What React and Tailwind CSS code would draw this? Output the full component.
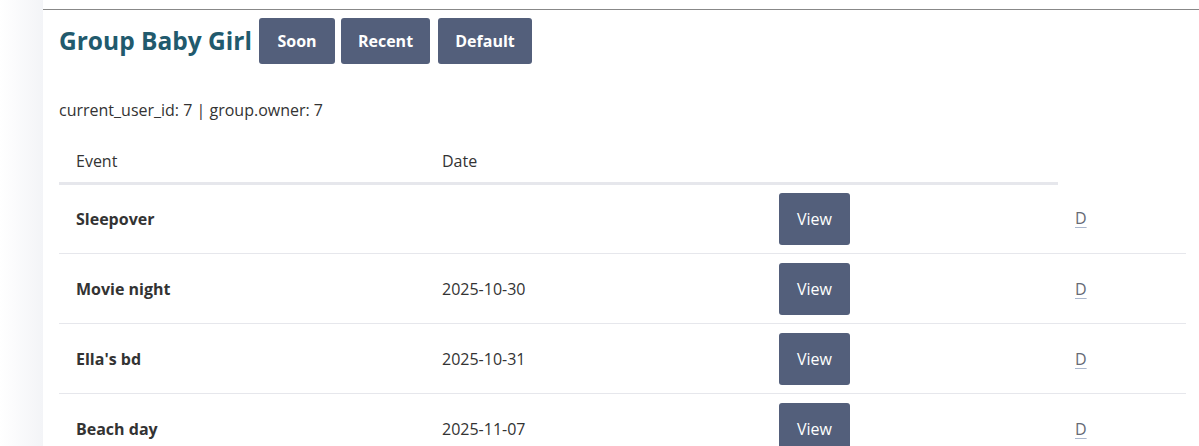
const events = [
  { name: "Sleepover", date: "" },
  { name: "Movie night", date: "2025-10-30" },
  { name: "Ella's bd", date: "2025-10-31" },
  { name: "Beach day", date: "2025-11-07" },
];

export default function App() {
  return (
    <div
      className="flex min-h-[446px] bg-white text-[#333333]"
      style={{ fontFamily: '"Open Sans", "Noto Sans", sans-serif' }}
    >
      <aside className="w-[43px] shrink-0 bg-gradient-to-r from-white to-[#f3f4f7]" />
      <main className="flex-1 mt-[9px] border-t border-[#888888] pl-[16px]">
        <div className="flex items-center pt-[8px]">
          <h1 className="w-[200px] shrink-0 text-[24.5px] font-bold text-[#215a6d] leading-[46px]">
            Group Baby Girl
          </h1>
          <button
            type="button"
            className="w-[76px] h-[46px] rounded-[3px] bg-[#535f7b] text-white font-bold text-[16px]"
          >
            Soon
          </button>
          <button
            type="button"
            className="ml-[6px] w-[89px] h-[46px] rounded-[3px] bg-[#535f7b] text-white font-bold text-[16px]"
          >
            Recent
          </button>
          <button
            type="button"
            className="ml-[8px] w-[94px] h-[46px] rounded-[3px] bg-[#535f7b] text-white font-bold text-[16px]"
          >
            Default
          </button>
        </div>
        <p className="mt-[34px] text-[16px] leading-[24px]">
          current_user_id: 7 | group.owner: 7
        </p>
        <table className="mt-[18px] table-fixed border-collapse w-[1127px] text-[16px]">
          <colgroup>
            <col className="w-[366px]" />
            <col className="w-[337px]" />
            <col className="w-[296px]" />
            <col className="w-[128px]" />
          </colgroup>
          <thead>
            <tr>
              <th className="border-b-[3px] border-[#e6e7ec] text-left font-medium pl-[17px] pt-[9px] pb-[9px] leading-[24px]">
                Event
              </th>
              <th className="border-b-[3px] border-[#e6e7ec] text-left font-medium pl-[17px] leading-[24px]">
                Date
              </th>
              <th className="border-b-[3px] border-[#e6e7ec]" />
              <th />
            </tr>
          </thead>
          <tbody>
            {events.map((ev) => (
              <tr key={ev.name} className="border-b border-[#e6e7ec]">
                <td className="h-[70px] pl-[17px] font-bold align-middle">{ev.name}</td>
                <td className="pl-[17px] align-middle">{ev.date}</td>
                <td className="pl-[17px] align-middle">
                  <button
                    type="button"
                    className="w-[71px] h-[52px] rounded-[3px] bg-[#535f7b] text-white text-[16px]"
                  >
                    View
                  </button>
                </td>
                <td className="pl-[17px] align-middle">
                  <a
                    href="#"
                    className="text-[#666a75] underline decoration-[#a9b6cc] underline-offset-[3px]"
                  >
                    D
                  </a>
                </td>
              </tr>
            ))}
          </tbody>
        </table>
      </main>
    </div>
  );
}
